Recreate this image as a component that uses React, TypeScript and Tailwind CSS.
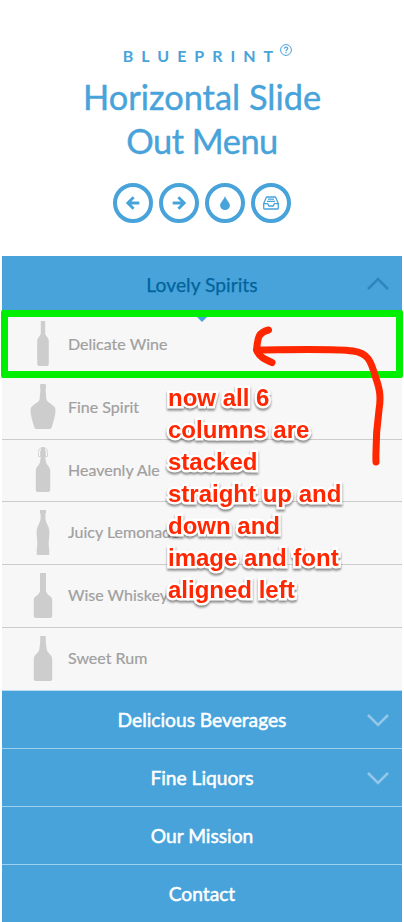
import React from "react";

const bottles: { name: string; shape: React.ReactNode }[] = [
  {
    name: "Delicate Wine",
    shape: <path d="M10.800 0h4.400v12c0 3 3.600 4.500 3.600 8v22.500c0 1.500-.8 2.500-2 2.500H9.200c-1.200 0-2-1-2-2.500V20c0-3.500 3.600-5 3.600-8z" />,
  },
  {
    name: "Fine Spirit",
    shape: <path d="M10.500 0h5l.4 1v3.500l-.4.8.9 9.700c.3 4 9.100 5.500 9.100 11 0 4.500-1.500 10-3.500 16.500-.5 1.500-1 2.500-2 2.500H6c-1 0-1.500-1-2-2.500C2 36 .5 30.500.5 26c0-5.500 8.800-7 9.100-11l.9-9.700-.4-.8V1z" />,
  },
  {
    name: "Heavenly Ale",
    shape: (
      <>
        <path d="M10.800.500q2.200-.8 4.400 0V4h.600v6l-.5 1 .7 4c.4 3 4.200 5 4.200 8.500v19c0 1.500-.7 2.500-2 2.500H7.800c-1.300 0-2-1-2-2.500v-19c0-3.500 3.800-5.500 4.200-8.500l.7-4-.5-1V4h.600z" />
        <path d="M10.500 1C8.500 2 8.700 4 8.500 5.500V9.500h2M15.500 1c2 1 1.800 3 2 4.500V9.500h-2" fill="none" stroke="#d6d6d6" strokeWidth="1" />
      </>
    ),
  },
  {
    name: "Juicy Lemonade",
    shape: <path d="M10 0h6v3l-.6 1v4c0 5 4 8 4 14 0 4-.7 8-.7 11s.4 5.500.7 7.500l-.2 1v3.500H6.800v-3.500l-.2-1c.3-2 .7-4.500.7-7.500s-.7-7-.7-11c0-6 4-9 4-14V4L10 3z" />,
  },
  {
    name: "Wise Whiskey",
    shape: <path d="M10 0h6v17.500c0 4.500 6.200 5.500 6.200 9V42.500c0 1.700-.8 2.500-2.200 2.500H6c-1.400 0-2.200-.8-2.200-2.500V26.500c0-3.500 6.200-4.500 6.200-9z" />,
  },
  {
    name: "Sweet Rum",
    shape: <path d="M10.200 0h5.600v6l.8 7c.3 4 5.600 5.500 5.600 10v20c0 1.300-.7 2-2 2H5.800c-1.300 0-2-.7-2-2V23c0-4.500 5.300-6 5.600-10l.8-7z" />,
  },
];

const sections = [
  { label: "Delicious Beverages", expandable: true },
  { label: "Fine Liquors", expandable: true },
  { label: "Our Mission", expandable: false },
  { label: "Contact", expandable: false },
];

const toolbar: React.ReactNode[] = [
  <path d="M14.300 8H4M8.600 2.200 2.800 8l5.800 5.800" fill="none" stroke="currentColor" strokeWidth="2.900" />,
  <path d="M1.700 8H12M7.400 2.200 13.200 8l-5.800 5.800" fill="none" stroke="currentColor" strokeWidth="2.900" />,
  <path d="M8 1C7.200 4.400 3.100 7.500 3.100 10.500a4.900 4.600 0 0 0 9.800 0C12.900 7.500 8.800 4.400 8 1z" fill="currentColor" />,
  <g fill="none" stroke="currentColor" strokeWidth="1.300" strokeLinejoin="round">
    <path d="M3.500 2h9l2.800 6.500v4.800q0 .700-.700.700H1.400q-.700 0-.700-.700V8.500z" />
    <path d="M.700 8.700h4.100l1 2.300h4.400l1-2.300h4.100M5 4.200h6M4 6.400h8" />
  </g>,
];

function Chevron({ up = false }: { up?: boolean }) {
  return (
    <svg
      viewBox="0 0 22 14"
      className={"absolute right-[13px] h-[14px] w-[22px] " + (up ? "top-[21px] text-[#2f86bf]" : "top-[22px] text-[#91c8e9]")}
    >
      <path d={up ? "M1 12 11 2l10 10" : "M1 2l10 10L21 2"} fill="none" stroke="currentColor" strokeWidth="2.600" />
    </svg>
  );
}

function Header() {
  return (
    <header className="flex h-[256px] flex-col items-center text-[#47a3da]">
      <div className="relative mt-[45px] h-[22px] text-[16px] leading-[22px] font-bold tracking-[8px]">
        BLUEPRINT
        <svg viewBox="0 0 12 12" className="absolute top-[-1px] right-[-11px] h-[12px] w-[12px]" fill="none" stroke="currentColor">
          <circle cx="6" cy="6" r="5.400" />
          <path d="M4.300 4.800c0-2.300 3.400-2.300 3.400-.3C7.700 5.700 6 5.700 6 7.200M6 8v1.300" strokeWidth="1.200" />
        </svg>
      </div>
      <h1 className="mt-[8px] text-center text-[34.400px] leading-[44px] [-webkit-text-stroke:0.4px_#47a3da]">
        Horizontal Slide
        <br />
        <span className="tracking-[-0.5px]">Out Menu</span>
      </h1>
      <nav className="mt-[20px] flex gap-[6px]">
        {toolbar.map((icon, i) => (
          <a key={i} className="flex h-[40px] w-[40px] items-center justify-center rounded-full border-4 border-[#47a3da]">
            <svg viewBox="0 0 16 16" className="h-[16px] w-[16px]">{icon}</svg>
          </a>
        ))}
      </nav>
    </header>
  );
}

function Annotations() {
  return (
    <>
      <div className="absolute top-[310px] left-[1px] h-[68px] w-[402px] rounded-[2px] border-[7px] border-[#00ee00]" />
      <svg viewBox="0 0 404 922" className="absolute top-0 left-0 h-[922px] w-[404px]" fill="none" stroke="#ff2600" strokeWidth="7" strokeLinecap="round" strokeLinejoin="round">
        <path d="M376 462C375.500 440 377 424 379 410C381.500 395 379 387 375.500 377C371 361 368 353 353 351C335 348.500 301 349.500 257 350" />
        <path d="M268.500 330C257.500 333 258 338 256.500 350C259 356.500 264 359 272 362.500" />
      </svg>
      <p className="absolute top-[382px] left-[168px] whitespace-nowrap font-['Liberation_Sans',Arial,sans-serif] text-[24px] leading-[32px] font-bold text-[#ff2600] [paint-order:stroke_fill] [-webkit-text-stroke:5px_white] [filter:drop-shadow(0_2px_1px_rgba(0,0,0,0.45))]">
        now all 6<br />
        columns are<br />
        stacked<br />
        straight up and<br />
        down and<br />
        image and font<br />
        aligned left
      </p>
    </>
  );
}

export default function App() {
  return (
    <div className="relative h-[922px] w-[404px] overflow-hidden bg-white font-[Lato,sans-serif]">
      <Header />
      <main className="mx-[2px]">
        <div className="relative flex h-[58px] items-center justify-center bg-[#47a3da] pt-[1px] text-[19.300px] text-[#02639d] [-webkit-text-stroke:0.250px_#02639d]">
          Lovely Spirits
          <Chevron up />
          <span className="absolute top-[57px] left-[191px] h-0 w-0 border-x-[9px] border-t-[9px] border-x-transparent border-t-[#47a3da]" />
        </div>
        <ul className="grid h-[377px] grid-rows-6 bg-[#f7f7f7]">
          {bottles.map((b) => (
            <li key={b.name} className="flex items-center border-b border-[#cccccc] pb-[2px] pl-[28px] text-[16px] text-[#a0a0a0] [-webkit-text-stroke:0.200px_#a0a0a0] last:border-[#b8dcf1]">
              <svg viewBox="0 0 26 45" className="mr-[12px] h-[45px] w-[26px] shrink-0" fill="#cdcdcd">
                {b.shape}
              </svg>
              {b.name}
            </li>
          ))}
        </ul>
        {sections.map((s) => (
          <div key={s.label} className="relative flex h-[58px] items-center justify-center border-b border-[#9bd0ee] bg-[#47a3da] pt-[2px] text-[19.200px] text-white [-webkit-text-stroke:0.500px_white] last:border-[#47a3da]">
            {s.label}
            {s.expandable && <Chevron />}
          </div>
        ))}
      </main>
      <Annotations />
    </div>
  );
}
